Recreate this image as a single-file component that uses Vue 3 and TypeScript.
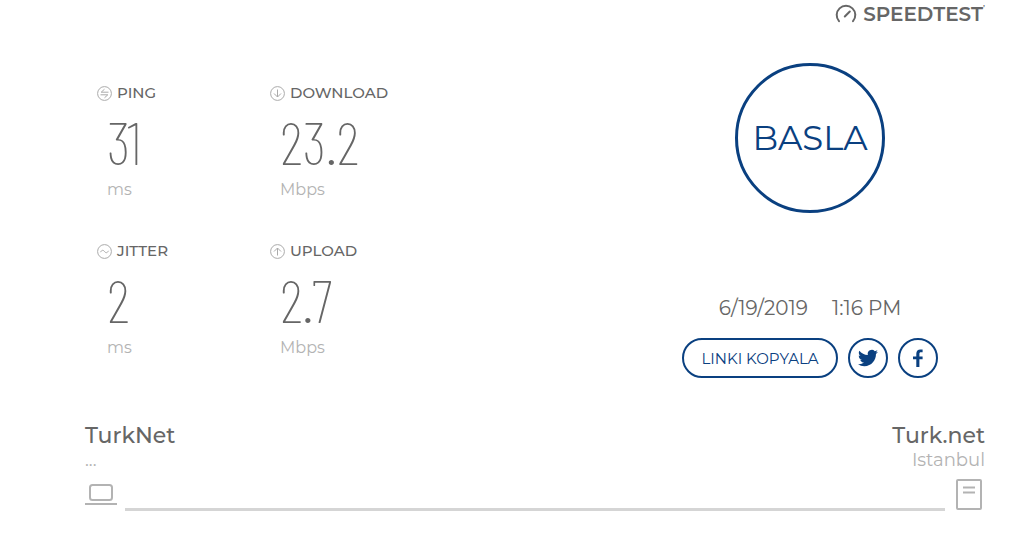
<script setup lang="ts">
interface Metric {
  id: string
  label: string
  value: string
  unit: string
  icon: string[]
}

const metrics: Metric[] = [
  { id: 'ping', label: 'PING', value: '31', unit: 'ms', icon: ['M11.5 6.2H4.2L7.5 3.2', 'M3.5 8.8h7.3L7.5 11.8'] },
  { id: 'download', label: 'DOWNLOAD', value: '23.2', unit: 'Mbps', icon: ['M7.5 3.500v7.500', 'M4 7.500l3.500 3.500 3.500-3.500'] },
  { id: 'jitter', label: 'JITTER', value: '2', unit: 'ms', icon: ['M3.5 8.2c1.3-2.4 2.7-2.4 4-.7s2.700 1.700 4-.7'] },
  { id: 'upload', label: 'UPLOAD', value: '2.7', unit: 'Mbps', icon: ['M7.5 11.500V4', 'M4 7.500l3.500-3.500 3.500 3.500'] },
]
</script>

<template>
  <div class="page">
    <header class="header">
      <a class="brand" href="#" aria-label="Speedtest">
        <svg class="gauge" viewBox="0 0 22 20" aria-hidden="true">
          <path d="M4 17.200A9.300 9.300 0 1 1 18 17.200" />
          <path d="M9.800 12.500l5-5" />
        </svg>
        <span>SPEEDTEST</span><span class="mark">’</span>
      </a>
    </header>

    <main class="main">
      <section class="metrics">
        <div v-for="m in metrics" :key="m.id" class="metric">
          <h2 class="label">
            <svg class="label-icon" viewBox="0 0 15 15" aria-hidden="true">
              <circle cx="7.500" cy="7.500" r="6.900" />
              <path v-for="d in m.icon" :key="d" :d="d" />
            </svg>
            {{ m.label }}
          </h2>
          <div class="value">{{ m.value }}</div>
          <div class="unit">{{ m.unit }}</div>
        </div>
      </section>

      <section class="actions">
        <button class="start" type="button">BASLA</button>
        <div class="date"><span>6/19/2019</span><span>1:16 PM</span></div>
        <div class="share">
          <button class="copy" type="button">LINKI KOPYALA</button>
          <a class="round" href="#" aria-label="Twitter">
            <svg class="share-icon" viewBox="0 0 24 24" aria-hidden="true">
              <path d="M23.953 4.570a10 10 0 0 1-2.825.775 4.958 4.958 0 0 0 2.163-2.723 10 10 0 0 1-3.127 1.184 4.920 4.920 0 0 0-8.384 4.482C7.690 8.095 4.067 6.130 1.640 3.162a4.822 4.822 0 0 0-.666 2.475c0 1.710.870 3.213 2.188 4.096a4.904 4.904 0 0 1-2.228-.616v.060a4.923 4.923 0 0 0 3.946 4.827 4.996 4.996 0 0 1-2.212.085 4.936 4.936 0 0 0 4.604 3.417A9.867 9.867 0 0 1 0 19.540a13.995 13.995 0 0 0 7.548 2.212c9.053 0 13.998-7.496 13.998-13.985 0-.210 0-.420-.015-.630a9.935 9.935 0 0 0 2.422-2.567z" />
            </svg>
          </a>
          <a class="round" href="#" aria-label="Facebook">
            <svg class="share-icon" viewBox="0 0 20 20" aria-hidden="true">
              <path d="M8.300 19v-7.700H5V8.500h3.300V5.800C8.300 2.900 9.900 1.500 12.300 1.500c1.200 0 2 .1 2.300.1v2.700H13c-1.300 0-1.600.7-1.600 1.600v2.600h3.200v2.800h-3.200V19z" />
            </svg>
          </a>
        </div>
      </section>
    </main>

    <footer class="footer">
      <div class="hosts">
        <div>
          <div class="host">TurkNet</div>
          <div class="place">...</div>
        </div>
        <div class="server">
          <div class="host">Turk.net</div>
          <div class="place">Istanbul</div>
        </div>
      </div>
      <div class="link">
        <svg class="laptop" viewBox="0 0 32 22" aria-hidden="true">
          <rect x="5" y="1" width="22" height="15" rx="2.500" />
          <path d="M0 20h32" />
        </svg>
        <div class="line"></div>
        <svg class="tower" viewBox="0 0 32 32" aria-hidden="true">
          <rect x="4" y="1" width="24" height="29" rx="1" />
          <path d="M10 8.500h12M10 13.500h12" />
        </svg>
      </div>
    </footer>
  </div>
</template>

<style>
body {
  margin: 0;
  background: #fff;
}
</style>

<style scoped>
.page {
  box-sizing: border-box;
  padding: 4px 31px 24px 85px;
  font-family: Montserrat, Gotham, Inter, "Open Sans", sans-serif;
  color: #666;
}
.header {
  display: flex;
  justify-content: flex-end;
}
.brand {
  display: flex;
  align-items: center;
  height: 20px;
  color: #666;
  font-size: 20px;
  line-height: 20px;
  font-weight: 600;
  text-decoration: none;
}
.gauge {
  width: 22px;
  height: 20px;
  margin-right: 6px;
  fill: none;
  stroke: #666;
  stroke-width: 2;
  stroke-linecap: round;
}
.mark {
  font-size: 8px;
  line-height: 8px;
  align-self: flex-start;
}
.main {
  display: flex;
  justify-content: space-between;
  padding-top: 39px;
}
.metrics {
  display: grid;
  grid-template-columns: 173px 173px;
  grid-auto-rows: 158px;
  padding: 20px 0 0 12px;
}
.label {
  display: flex;
  align-items: center;
  gap: 5px;
  margin: 0;
  font-size: 15px;
  line-height: 20px;
  font-weight: 500;
}
.label-icon {
  width: 15px;
  height: 15px;
  fill: none;
  stroke: #aaa;
  stroke-width: 1;
}
.value {
  padding: 8px 0 0 10px;
  font-family: "Barlow Condensed", "Roboto Condensed", Roboto, sans-serif;
  font-size: 60px;
  line-height: 60px;
  font-weight: 200;
}
.unit {
  padding: 9px 0 0 10px;
  color: #b3b3b3;
  font-size: 16px;
  line-height: 20px;
  font-weight: 400;
}
.actions {
  display: flex;
  flex-direction: column;
  align-items: center;
  width: 350px;
}
.start {
  box-sizing: border-box;
  width: 150px;
  height: 150px;
  padding: 0;
  border: 3px solid #0a4080;
  border-radius: 50%;
  background: none;
  color: #0a4080;
  font-family: inherit;
  font-size: 34px;
  font-weight: 400;
}
.date {
  display: flex;
  gap: 24px;
  margin-top: 83px;
  font-size: 20px;
  line-height: 24px;
}
.share {
  display: flex;
  gap: 10px;
  margin-top: 18px;
}
.copy {
  box-sizing: border-box;
  height: 40px;
  padding: 0 17px;
  border: 2px solid #0a4080;
  border-radius: 20px;
  background: none;
  color: #0a4080;
  font-family: inherit;
  font-size: 15px;
  white-space: nowrap;
}
.round {
  box-sizing: border-box;
  display: flex;
  align-items: center;
  justify-content: center;
  width: 40px;
  height: 40px;
  border: 2px solid #0a4080;
  border-radius: 50%;
}
.share-icon {
  width: 20px;
  height: 20px;
  fill: #0a4080;
}
.footer {
  padding-top: 25px;
}
.hosts {
  display: flex;
  justify-content: space-between;
}
.server {
  text-align: right;
}
.host {
  font-size: 22px;
  line-height: 24px;
  font-weight: 500;
}
.place {
  color: #b3b3b3;
  font-size: 18px;
  line-height: 24px;
  font-weight: 400;
}
.link {
  display: flex;
  align-items: flex-end;
  gap: 8px;
  padding-top: 7px;
}
.laptop,
.tower {
  flex: none;
  fill: none;
  stroke: #b3b3b3;
  stroke-width: 2;
}
.laptop {
  width: 32px;
  height: 22px;
  margin-bottom: 5px;
}
.line {
  flex: 1;
  height: 3px;
  background: #d5d5d5;
}
.tower {
  width: 32px;
  height: 32px;
}
</style>
